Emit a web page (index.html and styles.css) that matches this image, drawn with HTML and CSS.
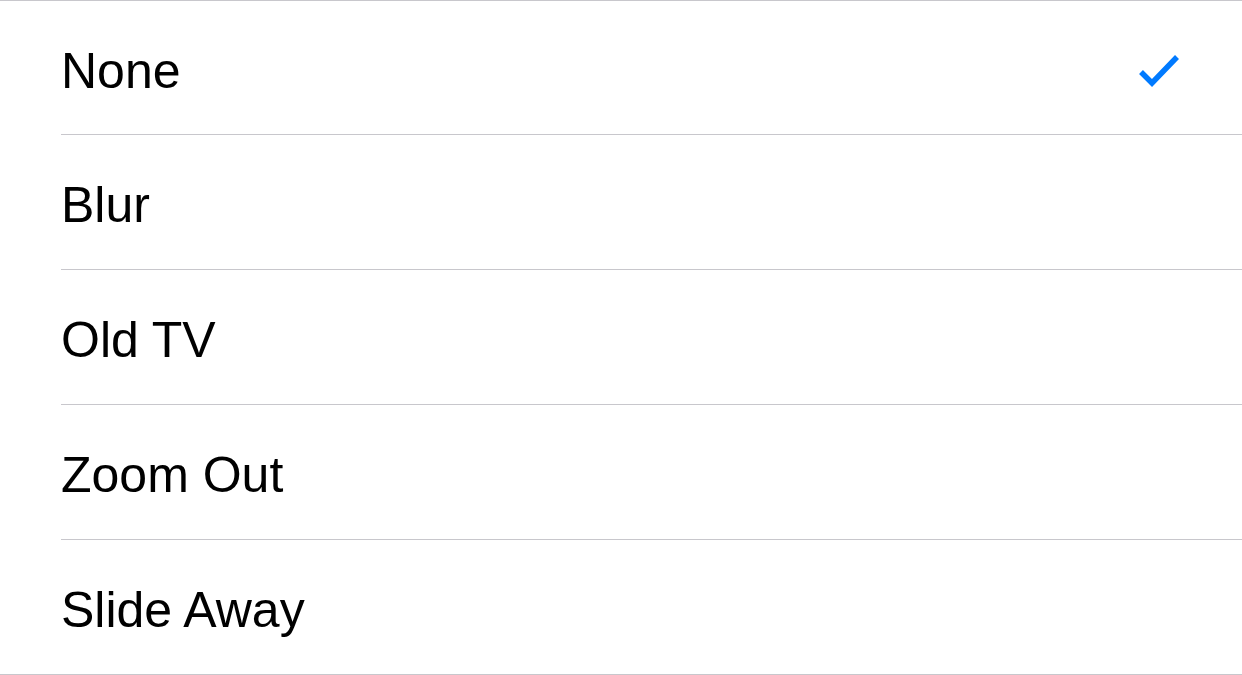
FILE: index.html
```html
<!DOCTYPE html>
<html lang="en">
<head>
  <meta charset="UTF-8" />
  <title>Transition</title>
  <link rel="stylesheet" href="styles.css">
</head>
<body>

  <ul class="options">
    <li class="option">
      <span class="label">None</span>
      <svg class="check" width="44" height="34" viewBox="0 0 44 34">
        <path d="M4 18 L15 29 L40 3" fill="none" stroke="#007aff" stroke-width="5.5" stroke-linecap="butt" stroke-linejoin="miter" />
      </svg>
    </li>
    <li class="option"><span class="label">Blur</span></li>
    <li class="option"><span class="label">Old TV</span></li>
    <li class="option"><span class="label">Zoom Out</span></li>
    <li class="option last"><span class="label">Slide Away</span></li>
  </ul>

</body>
</html>
```

FILE: styles.css
```css
body {
  margin: 0;
  background: #ffffff;
  font-family: "Liberation Sans", Arial, sans-serif;
  color: #000000;
}
.options {
  list-style: none;
  margin: 0;
  padding: 0;
  border-top: 1px solid #c8c7cc;
}
.option {
  height: 135px;
  box-sizing: border-box;
  margin-left: 61px;
  padding-top: 6px;
  padding-right: 61px;
  display: flex;
  align-items: center;
  justify-content: space-between;
  border-bottom: 1px solid #c8c7cc;
}
.option:first-child {
  height: 134px;
}
.option.last {
  margin-left: 0;
  padding-left: 61px;
}
.label {
  font-size: 50px;
  line-height: 56px;
}
.check {
  display: block;
  margin-top: 0;
}
```
